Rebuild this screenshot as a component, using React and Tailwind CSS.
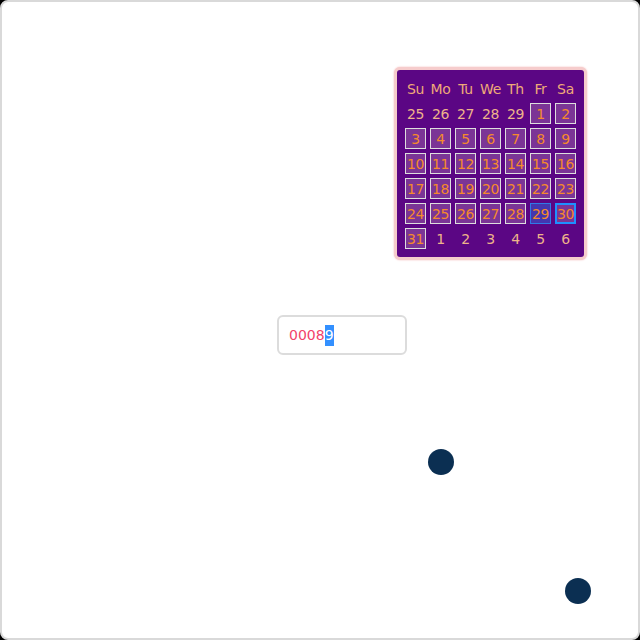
const weekDays = ["Su", "Mo", "Tu", "We", "Th", "Fr", "Sa"];

// 42 cells: trailing days of previous month, this month, leading days of next
const days = [
  ...[25, 26, 27, 28, 29].map((d) => ({ d, out: true })),
  ...Array.from({ length: 31 }, (_, i) => ({ d: i + 1, out: false })),
  ...[1, 2, 3, 4, 5, 6].map((d) => ({ d, out: true })),
];

function DayCell({ d, out }) {
  if (out) {
    return (
      <div className="flex h-[21px] items-center justify-center text-[#eeb48a]">{d}</div>
    );
  }
  let cls = "border border-[#dedede] bg-[#7b3596]";
  if (d === 29) cls = "border border-[#2f7ae6] bg-[#4436b0]";
  if (d === 30) cls = "border-2 border-[#1e90ff] bg-[#7b3596]";
  return (
    <div className={`flex h-[21px] items-center justify-center text-[#f58a2c] ${cls}`}>{d}</div>
  );
}

function Calendar() {
  return (
    <div className="absolute left-[392px] top-[65px] rounded-md border-[3px] border-[#f6cccc] bg-[#5b0684] p-2 shadow-[0_0_2px_#f3b8b8]">
      <div className="grid grid-cols-[repeat(7,21px)] auto-rows-[21px] gap-1 text-[14px] leading-none tracking-[-0.3px]">
        {weekDays.map((w) => (
          <div key={w} className="flex items-center justify-center text-[#eeaa78]">
            {w}
          </div>
        ))}
        {days.map((c, i) => (
          <DayCell key={i} {...c} />
        ))}
      </div>
    </div>
  );
}

export default function App() {
  return (
    <div className="h-[640px] w-[640px] bg-black" style={{ fontFamily: '"DejaVu Sans", "Open Sans", sans-serif' }}>
      <div className="relative h-full w-full rounded-lg border-2 border-[#d9d9d9] bg-white pl-[275px] pt-[313px]">
        <div className="flex h-10 w-[130px] items-center rounded-md border-2 border-[#dcdcdc] px-[10px] text-[14px] text-[#f2436b]">
          <span>0008</span>
          <span className="bg-[#3390ff] text-white">9</span>
        </div>
        <Calendar />
        <div className="absolute left-[426px] top-[447px] h-[26px] w-[26px] rounded-full bg-[#0b2f52]" />
        <div className="absolute left-[563px] top-[576px] h-[26px] w-[26px] rounded-full bg-[#0b2f52]" />
      </div>
    </div>
  );
}
